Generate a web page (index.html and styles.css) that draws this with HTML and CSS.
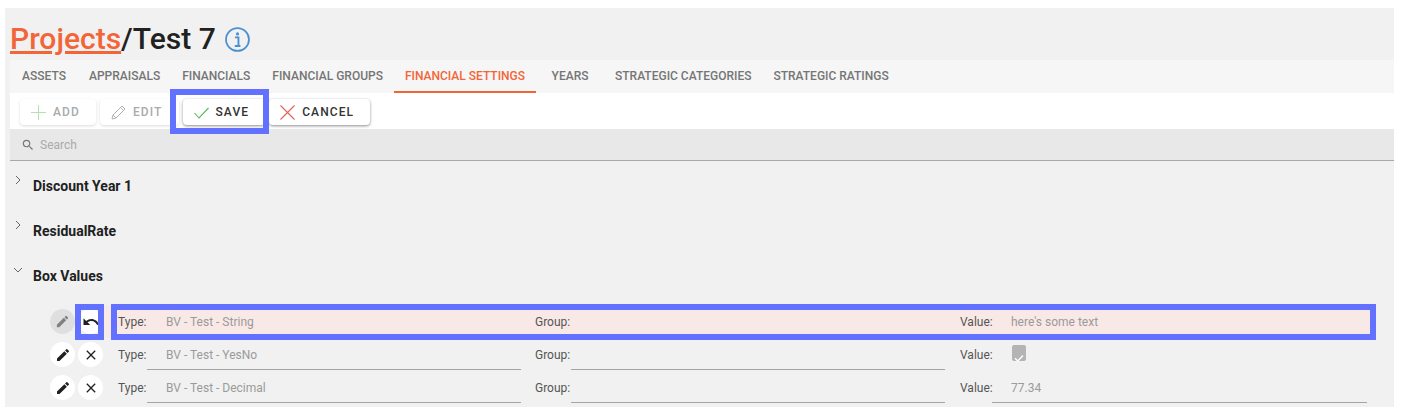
FILE: index.html
```html
<!DOCTYPE html>
<html lang="en">
<head>
<meta charset="utf-8">
<title>Test 7</title>
<link rel="stylesheet" href="styles.css">
</head>
<body>
<div class="panel">
  <header class="title">
    <h1><a href="#">Projects</a>/Test 7</h1>
    <svg class="info" viewBox="0 0 24 24" width="25" height="25"><circle cx="12" cy="12" r="11" fill="none" stroke="#4b8fd0" stroke-width="1.7"/><circle cx="12" cy="6.6" r="1.5" fill="#4b8fd0"/><path d="M9.6 10h3.3v8M9.4 18.2h5.4" fill="none" stroke="#4b8fd0" stroke-width="1.8"/></svg>
  </header>
  <nav class="tabs">
    <a class="tab">Assets</a>
    <a class="tab">Appraisals</a>
    <a class="tab">Financials</a>
    <a class="tab">Financial Groups</a>
    <a class="tab active">Financial Settings</a>
    <a class="tab">Years</a>
    <a class="tab">Strategic Categories</a>
    <a class="tab">Strategic Ratings</a>
  </nav>
  <div class="toolbar">
    <button class="btn disabled"><svg viewBox="0 0 15 15" width="15" height="15"><path d="M7.5 0v15M0 7.5h15" stroke="#5cb85c" stroke-width="1" fill="none"/></svg>Add</button>
    <button class="btn disabled"><svg viewBox="0 0 15 15" width="15" height="15"><path d="M1 14l1-4L11 1l3 3-9 9zM2 10l3 3M9.5 2.500l3 3" stroke="#555" stroke-width="1" fill="none"/></svg>Edit</button>
    <button class="btn"><svg viewBox="0 0 15 15" width="15" height="15"><path d="M.5 8l4.500 5L14.500 3" stroke="#5cb85c" stroke-width="1.100" fill="none"/></svg>Save</button>
    <button class="btn"><svg viewBox="0 0 15 15" width="15" height="15"><path d="M.5.5l14 14M14.500.5l-14 14" stroke="#e2615a" stroke-width="1.100" fill="none"/></svg>Cancel</button>
  </div>
  <div class="search">
    <svg viewBox="0 0 24 24" width="14" height="14"><path fill="#777" d="M15.500 14h-.79l-.28-.27A6.470 6.470 0 0 0 16 9.500 6.500 6.500 0 1 0 9.500 16c1.610 0 3.090-.59 4.230-1.570l.27.28v.79l5 4.990L20.490 19l-4.990-5zm-6 0C7.010 14 5 11.990 5 9.500S7.010 5 9.500 5 14 7.010 14 9.500 11.990 14 9.500 14z"/></svg>
    <span>Search</span>
  </div>
  <section class="groups">
    <div class="group-head"><svg class="chev" viewBox="0 0 10 10" width="10" height="10"><path d="M3 1l4 4-4 4" fill="none" stroke="#666" stroke-width="1"/></svg><h2>Discount Year 1</h2></div>
    <div class="group-head"><svg class="chev" viewBox="0 0 10 10" width="10" height="10"><path d="M3 1l4 4-4 4" fill="none" stroke="#666" stroke-width="1"/></svg><h2>ResidualRate</h2></div>
    <div class="group-head"><svg class="chev" viewBox="0 0 10 10" width="10" height="10"><path d="M1 3l4 4 4-4" fill="none" stroke="#666" stroke-width="1"/></svg><h2>Box Values</h2></div>
    <div class="rows">
      <div class="row edited">
        <div class="actions">
          <span class="round muted"><svg viewBox="0 0 24 24" width="15" height="15"><path d="M3 17.250V21h3.750L17.810 9.940l-3.750-3.750L3 17.250zM20.710 7.040a1 1 0 0 0 0-1.410l-2.340-2.340a1 1 0 0 0-1.410 0l-1.830 1.830 3.750 3.750 1.830-1.830z"/></svg></span>
          <span class="round"><svg viewBox="0 0 24 24" width="18" height="18"><path d="M12.500 8c-2.650 0-5.050.99-6.900 2.600L2 7v9h9l-3.620-3.620c1.390-1.160 3.160-1.880 5.120-1.880 3.540 0 6.550 2.310 7.600 5.500l2.370-.78C21.080 11.030 17.150 8 12.500 8z"/></svg></span>
        </div>
        <div class="fields">
          <div class="field f-type"><label>Type:</label><div class="input">BV - Test - String</div></div>
          <div class="field f-group"><label>Group:</label><div class="input"></div></div>
          <div class="field f-value"><label>Value:</label><div class="input">here's some text</div></div>
        </div>
      </div>
      <div class="row">
        <div class="actions">
          <span class="round"><svg viewBox="0 0 24 24" width="16" height="16"><path d="M3 17.250V21h3.750L17.810 9.940l-3.750-3.750L3 17.250zM20.710 7.040a1 1 0 0 0 0-1.410l-2.340-2.340a1 1 0 0 0-1.410 0l-1.830 1.830 3.750 3.750 1.830-1.830z"/></svg></span>
          <span class="round"><svg viewBox="0 0 24 24" width="16" height="16"><path d="M19 6.410 17.590 5 12 10.590 6.410 5 5 6.410 10.590 12 5 17.590 6.410 19 12 13.410 17.590 19 19 17.590 13.410 12z"/></svg></span>
        </div>
        <div class="fields">
          <div class="field f-type"><label>Type:</label><div class="input">BV - Test - YesNo</div></div>
          <div class="field f-group"><label>Group:</label><div class="input"></div></div>
          <div class="field f-value"><label>Value:</label><div class="check"><svg viewBox="0 0 14 14" width="14" height="14"><path d="M3 7.200l2.800 2.800L11 4.500" fill="none" stroke="#fff" stroke-width="1.500"/></svg></div></div>
        </div>
      </div>
      <div class="row">
        <div class="actions">
          <span class="round"><svg viewBox="0 0 24 24" width="16" height="16"><path d="M3 17.250V21h3.750L17.810 9.940l-3.750-3.750L3 17.250zM20.710 7.040a1 1 0 0 0 0-1.410l-2.340-2.340a1 1 0 0 0-1.410 0l-1.830 1.830 3.750 3.750 1.830-1.830z"/></svg></span>
          <span class="round"><svg viewBox="0 0 24 24" width="16" height="16"><path d="M19 6.410 17.590 5 12 10.590 6.410 5 5 6.410 10.590 12 5 17.590 6.410 19 12 13.410 17.590 19 19 17.590 13.410 12z"/></svg></span>
        </div>
        <div class="fields">
          <div class="field f-type"><label>Type:</label><div class="input">BV - Test - Decimal</div></div>
          <div class="field f-group"><label>Group:</label><div class="input"></div></div>
          <div class="field f-value"><label>Value:</label><div class="input">77.34</div></div>
        </div>
      </div>
    </div>
  </section>
</div>
<div class="mark mark-save"></div>
<div class="mark mark-undo"></div>
<div class="mark mark-row"></div>
</body>
</html>
```
FILE: styles.css
```css
* { box-sizing: border-box; }
html, body { margin: 0; padding: 0; }
body {
  position: relative;
  width: 1402px;
  height: 413px;
  padding: 8px 8px 0 5px;
  background: #fff;
  font-family: Roboto, "Liberation Sans", sans-serif;
  overflow: hidden;
}
.panel {
  height: 399px;
  padding-left: 5px;
  background: #f1f1f1;
  overflow: hidden;
}
.title {
  display: flex;
  align-items: center;
  height: 52px;
  padding: 10px 0 0 0;
}
.title h1 {
  margin: 0;
  font-size: 30px;
  line-height: 40px;
  font-weight: 500;
  color: #212121;
}
.title a { color: #f26538; text-decoration: underline; }
.info { margin-left: 9px; }
.tabs {
  display: flex;
  height: 33px;
  background: #f6f6f6;
}
.tab {
  min-width: 68px;
  padding: 0 11px;
  font-size: 12px;
  font-weight: 500;
  line-height: 33px;
  text-align: center;
  text-transform: uppercase;
  color: #757575;
}
.tab.active {
  color: #f26538;
  border-bottom: 2px solid #f26538;
}
.toolbar {
  display: flex;
  gap: 4px;
  height: 36px;
  padding: 6px 0 0 10px;
  background: #fff;
}
.btn {
  display: flex;
  align-items: center;
  gap: 7px;
  height: 26px;
  padding: 0 16px 0 11px;
  border: 0;
  border-radius: 4px;
  background: #fff;
  box-shadow: 0 1px 3px rgba(0,0,0,.45);
  font: 500 12px Roboto, sans-serif;
  letter-spacing: 1.1px;
  text-transform: uppercase;
  color: #333;
}
.btn.disabled {
  color: #aaa;
  box-shadow: 0 1px 3px rgba(0,0,0,.14);
}
.btn.disabled svg { opacity: .45; }
.search {
  display: flex;
  align-items: center;
  gap: 5px;
  height: 32px;
  padding-left: 11px;
  background: #e8e8e8;
  border-bottom: 1px solid #a8a8a8;
  font-size: 12px;
  color: #aaa;
}
.groups { padding-top: 2px; }
.group-head {
  display: flex;
  align-items: center;
  height: 45px;
}
.chev {
  margin: -11px 0 0 3px;
}
.group-head h2 {
  margin: 0 0 0 10px;
  font-size: 14px;
  font-weight: 700;
  color: #212121;
}
.rows { padding: 8px 0 0 40px; }
.row {
  display: flex;
  height: 33px;
}
.actions {
  display: flex;
  gap: 3px;
  width: 54px;
  padding-top: 3px;
}
.round {
  display: flex;
  align-items: center;
  justify-content: center;
  width: 25px;
  height: 25px;
  border-radius: 50%;
  background: #fff;
  fill: #212121;
}
.round.muted { background: #dfdfdf; fill: #808080; }
.fields {
  display: flex;
  width: 1268px;
  padding-left: 14px;
}
.edited .fields { background: #f9e9e6; height: 32px; }
.field {
  display: flex;
  font-size: 12px;
  line-height: 32px;
  color: #555;
}
.field label { flex: none; }
.f-type { width: 403px; margin-right: 14px; }
.f-type label { width: 29px; }
.f-group { width: 410px; margin-right: 15px; }
.f-group label { width: 36px; }
.f-value { width: 407px; }
.f-value label { width: 32px; }
.input {
  flex: 1;
  height: 31px;
  padding-left: 19px;
  border-bottom: 1px solid #a4a4a4;
  color: #9a9a9a;
}
.edited .input { border-bottom: 0; }
.check {
  width: 14px;
  height: 16px;
  margin: 6px 0 0 20px;
  border-radius: 2px;
  background: #b4b4b4;
}
.mark {
  position: absolute;
  border: 6px solid #6271ff;
}
.mark-save { left: 170px; top: 89px; width: 99px; height: 45px; }
.mark-undo { left: 75px; top: 304px; width: 29px; height: 36px; }
.mark-row { left: 111px; top: 304px; width: 1265px; height: 36px; }
```
